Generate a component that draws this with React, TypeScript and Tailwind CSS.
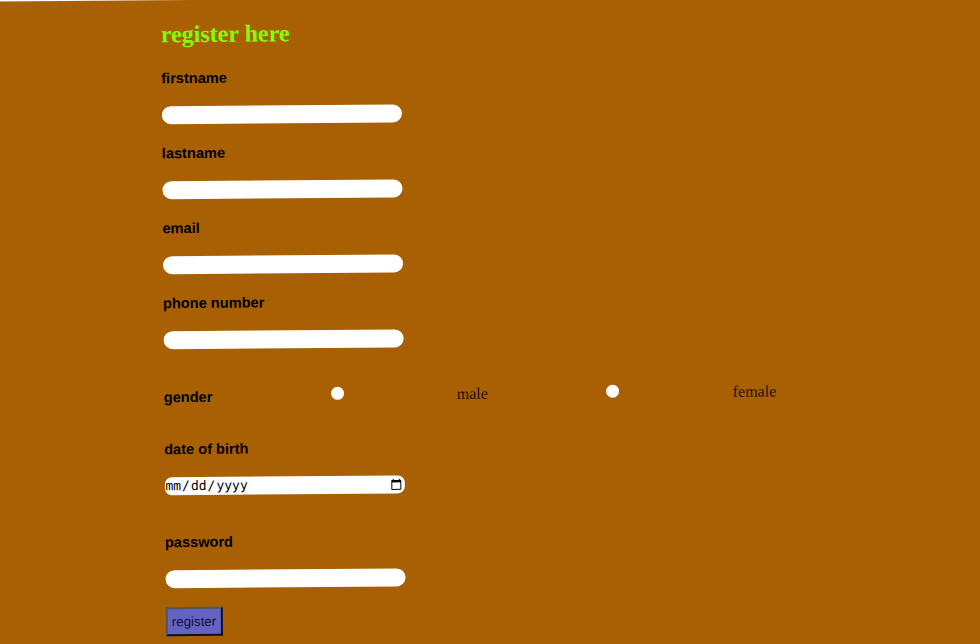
import React from "react";

const labelCls =
  "block text-[14.6px] leading-[18px] font-bold text-black [font-family:'Liberation_Sans',Arial,sans-serif]";
const inputCls = "block w-[240px] h-[18px] rounded-full bg-white outline-none border-0";
const serifCls = "text-[16px] text-[#1a1206] [font-family:'Liberation_Serif','Times_New_Roman',serif]";

interface IField {
  label: string;
  type: string;
}

const fields: IField[] = [
  { label: "firstname", type: "text" },
  { label: "lastname", type: "text" },
  { label: "email", type: "email" },
  { label: "phone number", type: "tel" },
];

const App: React.FC = () => {
  return (
    <div className="h-screen overflow-hidden bg-white">
      <div className="-ml-[60px] w-[1100px] min-h-[760px] bg-[#a86002] pl-[220.6px] pt-[20px] origin-[250px_0px] -rotate-[0.45deg]">
        <h2 className="text-[24px] leading-[28px] font-bold text-[#80ff00] [font-family:'Liberation_Serif','Times_New_Roman',serif]">
          register here
        </h2>

        <form className="flex flex-col">
          {fields.map((item, index: number) => (
            <div key={index} className={index === 0 ? "mt-[21px]" : "mt-[20px]"}>
              <label className={labelCls}>{item.label}</label>
              <input type={item.type} className={`${inputCls} mt-[19px]`} />
            </div>
          ))}

          <div className="mt-[35px] flex items-center h-[20px]">
            <label className={`${labelCls} w-[167px] mt-[5px]`}>gender</label>
            <div className="w-[126px] flex items-center mt-[1px]">
              <input
                type="radio"
                name="gender"
                className="appearance-none w-[13px] h-[13px] rounded-full bg-white"
              />
            </div>
            <span className={`w-[149px] mt-[4px] ${serifCls}`}>male</span>
            <div className="w-[127px] flex items-center mt-[1px]">
              <input
                type="radio"
                name="gender"
                className="appearance-none w-[13px] h-[13px] rounded-full bg-white"
              />
            </div>
            <span className={`mt-[4px] ${serifCls}`}>female</span>
          </div>

          <div className="mt-[36px]">
            <label className={labelCls}>date of birth</label>
            <input
              type="date"
              className="mt-[19px] block w-[240px] h-[18px] rounded-[7px] bg-white outline-none border-0 text-[13px] leading-[18px] text-black [font-family:'DejaVu_Sans_Mono',monospace]"
            />
          </div>

          <div className="mt-[38px]">
            <label className={labelCls}>password</label>
            <input type="password" className={`${inputCls} mt-[19px]`} />
          </div>

          <div className="mt-[19px]">
            <button
              type="button"
              className="w-[57px] h-[29px] bg-[#6363c6] border-2 border-t-[#555] border-l-[#555] border-b-[#111] border-r-[#111] text-[13.33px] text-[#111133] [font-family:'Liberation_Sans',Arial,sans-serif]"
            >
              register
            </button>
          </div>
        </form>
      </div>
    </div>
  );
};

export default App;
